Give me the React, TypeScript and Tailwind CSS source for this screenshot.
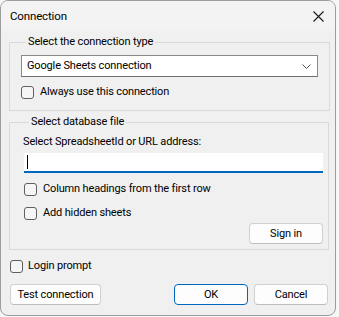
import React from "react";

function Check({ label, gap = "gap-[6px]" }: { label: string; gap?: string }) {
  return (
    <div className={`flex h-[16px] items-center ${gap}`}>
      <div className="h-[13px] w-[13px] shrink-0 rounded-[3px] border border-[#5f5f5f] bg-[#f5f5f5]" />
      <span className="leading-[16px]">{label}</span>
    </div>
  );
}

function Btn({ children, w, primary }: { children: React.ReactNode; w: string; primary?: boolean }) {
  return (
    <div
      className={`flex h-[21px] items-center justify-center rounded-[4px] border bg-[#fdfdfd] leading-[16px] ${w} ${
        primary ? "border-[#0067c0]" : "border-[#d0d0d0] border-b-[#bdbdbd]"
      }`}
    >
      {children}
    </div>
  );
}

export default function App() {
  return (
    <div className="h-[317px] w-[339px] overflow-hidden bg-[#f7f7f7] font-['Roboto',_'Liberation_Sans',_sans-serif] text-[11px] tracking-[-0.15px] text-black">
      <div className="flex h-[316px] w-[336px] flex-col overflow-hidden rounded-lg border border-[#9c9c9c] bg-[#f0f0f0]">
        <div className="flex h-[30px] shrink-0 items-center justify-between bg-[#f3f3f3] pl-[9px] pr-[11px]">
          <span className="text-[11.5px] leading-[16px]">Connection</span>
          <svg width="11" height="11" viewBox="0 0 11 11" className="mt-[1px]">
            <path d="M0.5 0.5 L10.5 10.5 M10.5 0.5 L0.5 10.5" stroke="#1a1a1a" strokeWidth="1.1" fill="none" />
          </svg>
        </div>
        <div className="flex flex-col pl-[8px]">
          <fieldset className="mt-[3px] w-[320px] border border-[#d9d9d9] px-[11px] pb-[10px] pt-[5px]">
            <legend className="ml-[5px] px-[2px] leading-[16px]">Select the connection type</legend>
            <div className="flex h-[22px] w-[297px] items-center justify-between border border-[#8a8a8a] border-b-[#6f6f6f] bg-white pl-[5px] pr-[6px]">
              <span className="leading-[16px]">Google Sheets connection</span>
              <svg width="9" height="5" viewBox="0 0 9 5">
                <path d="M0.5 0.5 L4.5 4.5 L8.5 0.5" stroke="#555" strokeWidth="1" fill="none" />
              </svg>
            </div>
            <div className="mt-[7px]">
              <Check label="Always use this connection" />
            </div>
          </fieldset>
          <fieldset className="mt-[3px] w-[320px] border border-[#d9d9d9] pb-[5px] pl-[14px] pr-[5px] pt-[4px]">
            <legend className="ml-[5px] px-[2px] leading-[16px]">Select database file</legend>
            <div className="-ml-[1px] leading-[16px]">Select SpreadsheetId or URL address:</div>
            <div className="mt-[3px] flex h-[20px] w-[299px] items-center border-b-2 border-[#0067c0] bg-white pl-[3px]">
              <div className="h-[14px] w-px bg-black" />
            </div>
            <div className="mt-[8px]">
              <Check label="Column headings from the first row" />
            </div>
            <div className="mt-[8px]">
              <Check label="Add hidden sheets" />
            </div>
            <div className="mt-[2px] flex justify-end">
              <Btn w="w-[74px]">Sign in</Btn>
            </div>
          </fieldset>
          <div className="mt-[8px] pl-[1px]">
            <Check label="Login prompt" gap="gap-[5px]" />
          </div>
          <div className="mt-[10px] flex items-center pl-[1px]">
            <Btn w="w-[91px]">Test connection</Btn>
            <div className="ml-[73px]">
              <Btn w="w-[74px]" primary>
                OK
              </Btn>
            </div>
            <div className="ml-[6px]">
              <Btn w="w-[74px]">Cancel</Btn>
            </div>
          </div>
        </div>
      </div>
    </div>
  );
}
